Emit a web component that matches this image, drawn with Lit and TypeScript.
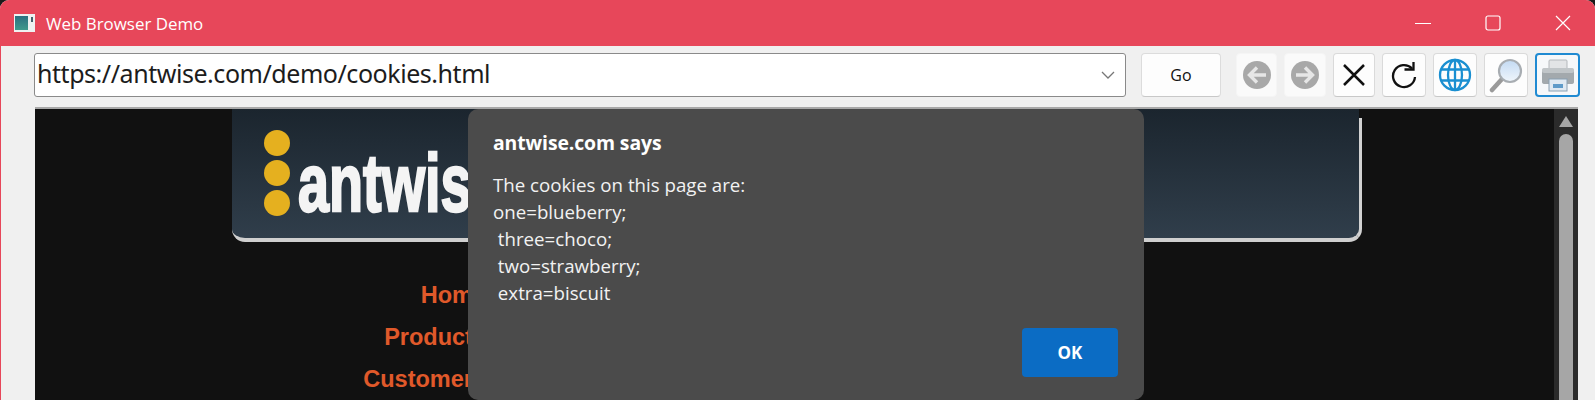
import { LitElement, html, css } from "lit";
import { customElement } from "lit/decorators.js";

const arrow = (d: string) => html`<svg width="32" height="32" viewBox="0 0 32 32"><circle cx="16" cy="16" r="14" fill="#a8a8a8"/><path d="${d}" fill="none" stroke="#e6e6e6" stroke-width="3.4"/></svg>`;

@customElement("app-root")
export class AppRoot extends LitElement {
  static styles = css`
    :host { display: block; width: 100%; height: 400px; overflow: hidden; background: #1a1a1a; font-family: "Open Sans", "Noto Sans", sans-serif; }
    .window { height: 400px; display: flex; flex-direction: column; border-radius: 9px 9px 0 0; overflow: hidden; background: #f0f0f0; }
    .title { flex: none; height: 46px; background: #e7475a; color: #fff; display: flex; align-items: center; font-size: 16.9px; }
    .app-icon { margin-left: 14px; margin-right: 11px; display: block; }
    .title-text { flex: 1; padding-top: 1px; }
    .wbtn { width: 70px; height: 46px; display: flex; align-items: center; justify-content: center; }
    .wbtn.last { margin-right: -3px; }
    .body { flex: 1; min-height: 0; display: flex; flex-direction: column; border-left: 1px solid #e7475a; }
    .toolbar { flex: none; height: 61px; display: flex; padding: 7px 15px 0 33px; box-sizing: border-box; }
    .combo { flex: 1; height: 44px; box-sizing: border-box; background: #fff; border: 1px solid #8a8a8a; border-radius: 3px; display: flex; align-items: center; padding: 0 10px 0 2px; font-size: 25px; color: #1c1c1c; font-family: "Noto Sans", sans-serif; letter-spacing: -0.45px; }
    .url { flex: 1; padding-bottom: 4px; }
    .go { width: 80px; height: 44px; margin-left: 15px; box-sizing: border-box; background: #fdfdfd; border: 1px solid #dcdcdc; border-bottom-color: #c8c8c8; border-radius: 4px; display: flex; align-items: center; justify-content: center; font-size: 16px; color: #111; font-weight: 500; }
    .icons { display: flex; margin-left: 15px; gap: 7px; }
    .ib { width: 44px; height: 44px; box-sizing: border-box; background: #fdfdfd; border: 1px solid #dadada; border-bottom-color: #c8c8c8; border-radius: 4px; display: flex; align-items: center; justify-content: center; }
    .ib.narrow { width: 42px; }
    .ib.off { width: 41px; background: #fafafa; border-color: #f5f5f5; }
    .ib.off.second { width: 42px; }
    .ib.focus { border: 2px solid #1f8ad2; width: 45px; background: #f6f8fa; }
    .view { flex: 1; min-height: 0; margin: 0 17px 0 34px; border-top: 2px solid #a8a8a8; background: #111; display: flex; position: relative; }
    .page { flex: 1; min-width: 0; overflow: hidden; }
    .banner { position: relative; width: 1130px; height: 133px; margin-left: 197px; box-sizing: border-box; display: flex; align-items: flex-start; background: linear-gradient(#1b252e, #303e4b); border-right: 3px solid #d2d2d2; border-bottom: 4px solid #cfcfcf; border-radius: 0 0 13px 13px; }
    .banner::after { content: ""; position: absolute; right: -3px; top: 0; width: 3px; height: 9px; background: #111; }
    .dots { display: flex; flex-direction: column; margin: 21px 0 0 32px; gap: 4px; flex: none; }
    .dot { width: 26px; height: 26px; border-radius: 50%; background: #e5b01f; }
    .wordmark { flex: none; margin: 24px 0 0 8px; font-family: "Liberation Sans", sans-serif; font-weight: 700; font-size: 82px; line-height: 100px; color: #f4f4f4; -webkit-text-stroke: 2.5px #f4f4f4; transform: scaleX(0.68); transform-origin: left top; }
    .nav { width: 451px; margin-top: 32px; text-align: right; font: 700 23.5px/42px "Liberation Sans", sans-serif; color: #e0592a; }
    .scroll { flex: none; width: 24px; background: #2b2b2b; display: flex; flex-direction: column; align-items: center; padding-top: 7px; box-sizing: border-box; gap: 7px; }
    .tri { width: 0; height: 0; border-left: 7px solid transparent; border-right: 7px solid transparent; border-bottom: 11px solid #a6a6a6; }
    .thumb { width: 14px; flex: 1; background: #a6a6a6; border-radius: 7px 7px 0 0; }
    .dialog { position: absolute; left: 433px; top: 0; width: 676px; height: 291px; box-sizing: border-box; background: #4b4b4b; border-radius: 10px; padding: 21px 25px 0; color: #f2f2f2; display: flex; flex-direction: column; }
    .d-title { font-weight: 700; font-size: 19.4px; line-height: 26px; letter-spacing: -0.1px; color: #fff; }
    .d-msg { margin: 15px 0 0; white-space: pre; font-family: inherit; font-size: 18.7px; line-height: 27px; }
    .d-foot { display: flex; justify-content: flex-end; margin-top: 22px; }
    .ok { width: 96px; height: 49px; margin-right: 1px; background: #0b6cc4; border-radius: 4px; color: #fff; font-weight: 700; font-size: 17px; display: flex; align-items: center; justify-content: center; }
  `;

  render() {
    return html`<div class="window">
      <div class="title">
        <svg class="app-icon" width="21" height="18" viewBox="0 0 21 18"><defs><linearGradient id="g" x1="0" y1="0" x2="0" y2="1"><stop offset="0" stop-color="#2b6f80"/><stop offset="1" stop-color="#3f9a8c"/></linearGradient></defs><rect width="21" height="18" fill="#eef1f1"/><rect x="1" y="2" width="13" height="14" fill="url(#g)"/><rect x="17" y="3" width="2" height="5" fill="#44606a"/></svg>
        <span class="title-text">Web Browser Demo</span>
        <div class="wbtn"><svg width="16" height="16" viewBox="0 0 16 16"><path d="M0 8.5H16" stroke="#fff" stroke-width="1"/></svg></div>
        <div class="wbtn"><svg width="16" height="16" viewBox="0 0 16 16"><rect x="1" y="1" width="14" height="14" rx="2" fill="none" stroke="#fff" stroke-width="1.2"/></svg></div>
        <div class="wbtn last"><svg width="16" height="16" viewBox="0 0 16 16"><path d="M1 1L15 15M15 1L1 15" stroke="#fff" stroke-width="1.2"/></svg></div>
      </div>
      <div class="body">
        <div class="toolbar">
          <div class="combo"><span class="url">https://antwise.com/demo/cookies.html</span><svg width="14" height="8" viewBox="0 0 14 8"><path d="M1 1L7 7L13 1" fill="none" stroke="#777" stroke-width="1.3"/></svg></div>
          <div class="go">Go</div>
          <div class="icons">
            <div class="ib off">${arrow("M25 16H9M16 8.5L8.5 16L16 23.5")}</div>
            <div class="ib off second">${arrow("M7 16H23M16 8.5L23.5 16L16 23.5")}</div>
            <div class="ib narrow"><svg width="24" height="24" viewBox="0 0 24 24"><path d="M2 2L22 22M22 2L2 22" stroke="#111" stroke-width="2.5"/></svg></div>
            <div class="ib"><svg width="28" height="28" viewBox="0 0 28 28"><path d="M22 7.5A11 11 0 1 0 25 16" fill="none" stroke="#111" stroke-width="2.3"/><path d="M14.5 8.5H23.5V1" fill="none" stroke="#111" stroke-width="2.3"/></svg></div>
            <div class="ib"><svg width="34" height="34" viewBox="0 0 34 34" fill="none" stroke="#1a8fd1" stroke-width="2.3"><circle cx="17" cy="17" r="15"/><ellipse cx="17" cy="17" rx="7" ry="15"/><path d="M17 2V32M3 11.5H31M3 22.5H31"/></svg></div>
            <div class="ib"><svg width="36" height="36" viewBox="0 0 36 36"><defs><linearGradient id="l" x1="0" y1="0" x2="0" y2="1"><stop offset="0" stop-color="#c3daf3"/><stop offset="1" stop-color="#f0f6fc"/></linearGradient></defs><path d="M14 22L4 33" stroke="#9a9a9a" stroke-width="4.5" stroke-linecap="round"/><circle cx="22" cy="14" r="11" fill="url(#l)" stroke="#a8adb2" stroke-width="2.2"/></svg></div>
            <div class="ib focus"><svg width="36" height="36" viewBox="0 0 36 36"><rect x="9" y="3" width="18" height="10" rx="1" fill="#e2e4e6" stroke="#b4b8bc"/><path d="M2 15Q2 11 6 11H30Q34 11 34 15V25Q34 27 31 27H5Q2 27 2 25Z" fill="#a3a9ad"/><rect x="2" y="11" width="32" height="5" rx="2" fill="#c0c5c8"/><rect x="9" y="22" width="18" height="12" fill="#dfe9f2" stroke="#8aa0b2"/><rect x="13" y="27" width="10" height="4" fill="#5f9bc9"/></svg></div>
          </div>
        </div>
        <div class="view">
          <div class="page">
            <div class="banner">
              <div class="dots"><div class="dot"></div><div class="dot"></div><div class="dot"></div></div>
              <div class="wordmark">antwise</div>
            </div>
            <div class="nav">Home<br />Products<br />Customers</div>
          </div>
          <div class="scroll"><div class="tri"></div><div class="thumb"></div></div>
          <div class="dialog">
            <div class="d-title">antwise.com says</div>
            <div class="d-msg">The cookies on this page are:
one=blueberry;
 three=choco;
 two=strawberry;
 extra=biscuit</div>
            <div class="d-foot"><div class="ok">OK</div></div>
          </div>
        </div>
      </div>
    </div>`;
  }
}
